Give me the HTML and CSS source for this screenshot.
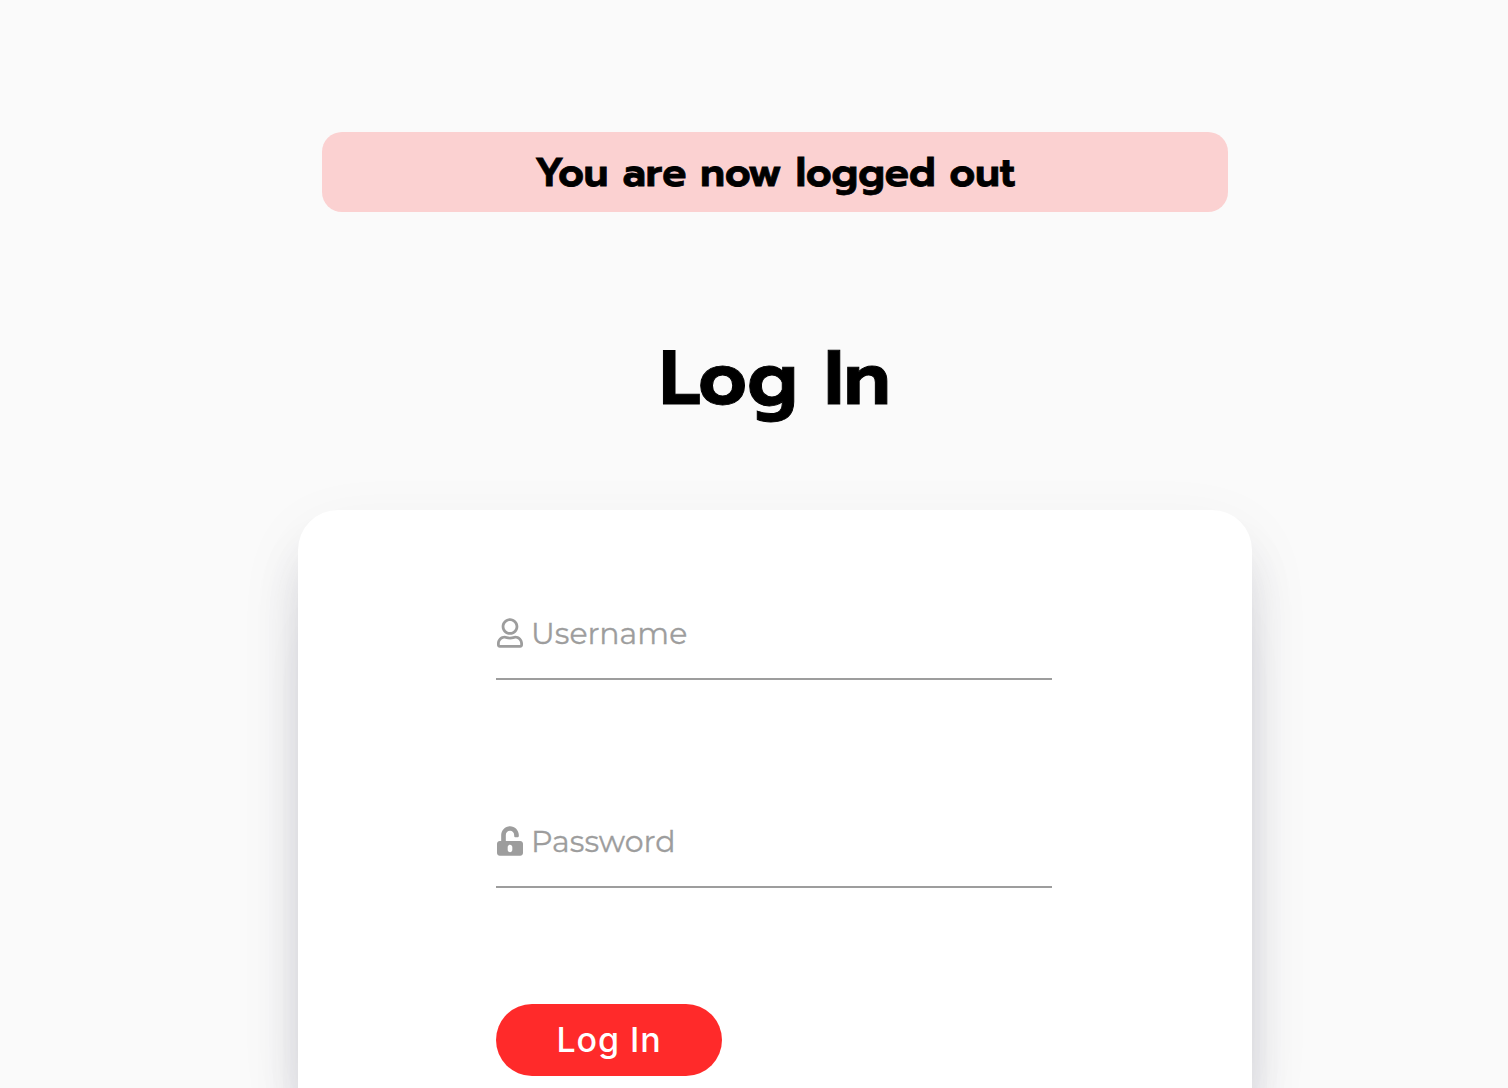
FILE: index.html
```html
<!DOCTYPE html>
<html lang="en">
<head>
<meta charset="utf-8">
<title>Log In</title>
<link rel="stylesheet" href="styles.css">
</head>
<body>
<main class="page">
  <div class="notice"><span class="notice-text">You are now logged out</span></div>
  <h1 class="title">Log In</h1>
  <form class="card">
    <label class="field">
      <svg class="icon" viewBox="0 0 448 512" fill="currentColor" aria-hidden="true"><path d="M313.600 304c-28.700 0-42.500 16-89.600 16-47.100 0-60.800-16-89.600-16C60.200 304 0 364.200 0 438.400V464c0 26.500 21.500 48 48 48h352c26.500 0 48-21.500 48-48v-25.600c0-74.200-60.200-134.400-134.400-134.400zM400 464H48v-25.600c0-47.600 38.800-86.400 86.400-86.400 14.600 0 38.300 16 89.600 16 51.700 0 74.900-16 89.600-16 47.600 0 86.400 38.800 86.400 86.400V464zM224 288c79.500 0 144-64.500 144-144S303.500 0 224 0 80 64.500 80 144s64.500 144 144 144zm0-240c52.900 0 96 43.100 96 96s-43.100 96-96 96-96-43.100-96-96 43.100-96 96-96z"/></svg>
      <span class="label">Username</span>
    </label>
    <label class="field">
      <svg class="icon" viewBox="0 0 448 512" fill="currentColor" aria-hidden="true"><path fill-rule="evenodd" d="M400 256H152V152.900c0-39.600 31.700-72.500 71.300-72.900 40-.4 72.700 32.100 72.700 72v16c0 13.300 10.700 24 24 24h32c13.300 0 24-10.700 24-24v-16C376 68 307.500-.3 223.500 0 139.500.3 72 69.500 72 153.500V256H48c-26.500 0-48 21.500-48 48v160c0 26.500 21.500 48 48 48h352c26.500 0 48-21.500 48-48V304c0-26.500-21.500-48-48-48zM264 408c0 22.100-17.900 40-40 40s-40-17.900-40-40v-48c0-22.100 17.900-40 40-40s40 17.900 40 40v48z"/></svg>
      <span class="label">Password</span>
    </label>
    <button class="submit" type="button">Log In</button>
  </form>
</main>
</body>
</html>
```
FILE: styles.css
```css
* { box-sizing: border-box; }
body {
  margin: 0;
  background: #fafafa;
  font-family: Prompt, Inter, sans-serif;
}
.page {
  display: flex;
  flex-direction: column;
  align-items: center;
  height: 1088px;
  overflow: hidden;
  padding: 132px 0 0 42px;
}
.notice {
  width: 906px;
  height: 80px;
  flex: none;
  border-radius: 20px;
  background: #fbd1d1;
  display: flex;
  align-items: center;
  justify-content: center;
}
.notice-text {
  padding-top: 1px;
  font-size: 40px;
  font-weight: 600;
  line-height: 80px;
  white-space: nowrap;
  -webkit-text-stroke: .8px #000;
}
.title {
  flex: none;
  margin: 117px 0 81px;
  font-size: 76px;
  font-weight: 600;
  line-height: 100px;
  -webkit-text-stroke: 1px #000;
}
.card {
  width: 954px;
  height: 578px;
  flex: none;
  padding: 88px 200px 0 198px;
  border-radius: 40px 40px 0 0;
  background: #fff;
  box-shadow: 0 40px 50px -10px rgba(50, 50, 93, .22), 0 100px 50px -10px rgba(50, 50, 93, .05), 0 22px 70px rgba(0, 0, 0, .06), 0 100px 70px rgba(0, 0, 0, .01);
}
.field {
  display: flex;
  align-items: center;
  gap: 8px;
  height: 82px;
  padding: 0 0 10px 1px;
  margin-bottom: 126px;
  border-bottom: 2px solid #9d9d9d;
  color: #9d9d9d;
}
.icon { width: 26px; height: 30px; flex: none; }
.label {
  padding-top: 2px;
  font-family: Montserrat, Inter, sans-serif;
  font-size: 30px;
  font-weight: 400;
  line-height: 40px;
  -webkit-text-stroke: .3px currentColor;
}
.submit {
  display: block;
  width: 226px;
  height: 72px;
  margin-top: -10px;
  padding: 0;
  border: 0;
  border-radius: 36px;
  background: #ff2a2a;
  color: #fff;
  font: 500 34px/72px Inter, sans-serif;
  letter-spacing: .9px;
}
```
